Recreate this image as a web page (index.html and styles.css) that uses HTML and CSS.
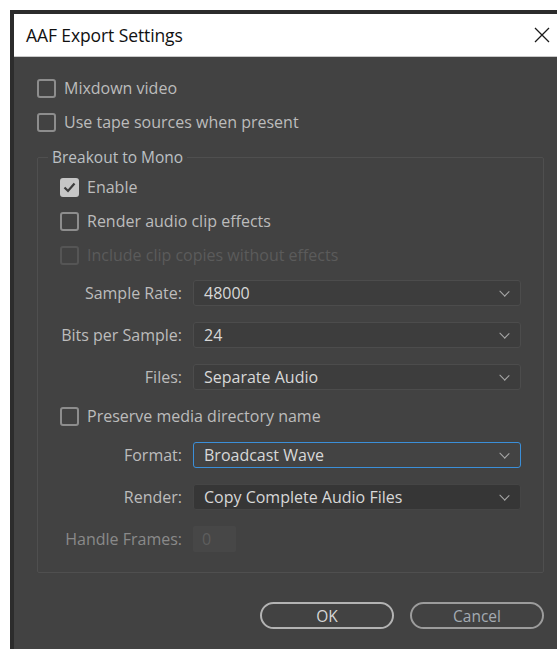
FILE: index.html
```html
<!DOCTYPE html>
<html lang="en">
<head>
<meta charset="utf-8">
<title>AAF Export Settings</title>
<link rel="stylesheet" href="styles.css">
</head>
<body>
<div class="window">
  <div class="titlebar">
    <span class="title">AAF Export Settings</span>
    <svg class="close" width="16" height="16" viewBox="0 0 16 16" aria-hidden="true">
      <path d="M1 1 L15 15 M15 1 L1 15" stroke="#1a1a1a" stroke-width="1.3" fill="none"/>
    </svg>
  </div>
  <div class="content">
    <label class="check"><span class="box"></span><span>Mixdown video</span></label>
    <label class="check"><span class="box"></span><span>Use tape sources when present</span></label>

    <fieldset class="group">
      <legend>Breakout to Mono</legend>
      <label class="check"><span class="box checked"><svg width="13" height="11" viewBox="0 0 13 11"><path d="M1.5 5.5 L5 9 L11.5 1.5" stroke="#3c3c3c" stroke-width="2.2" fill="none"/></svg></span><span>Enable</span></label>
      <label class="check"><span class="box"></span><span>Render audio clip effects</span></label>
      <label class="check disabled"><span class="box"></span><span>Include clip copies without effects</span></label>

      <div class="field"><span class="flabel">Sample Rate:</span><div class="select"><span>48000</span><i class="chev"></i></div></div>
      <div class="field"><span class="flabel">Bits per Sample:</span><div class="select"><span>24</span><i class="chev"></i></div></div>
      <div class="field"><span class="flabel">Files:</span><div class="select"><span>Separate Audio</span><i class="chev"></i></div></div>

      <label class="check preserve"><span class="box"></span><span>Preserve media directory name</span></label>

      <div class="field"><span class="flabel">Format:</span><div class="select focus"><span>Broadcast Wave</span><i class="chev"></i></div></div>
      <div class="field"><span class="flabel">Render:</span><div class="select dark"><span>Copy Complete Audio Files</span><i class="chev"></i></div></div>
      <div class="field"><span class="flabel dim">Handle Frames:</span><div class="numbox">0</div></div>
    </fieldset>

    <div class="buttons">
      <button class="btn ok">OK</button>
      <button class="btn cancel">Cancel</button>
    </div>
  </div>
</div>
</body>
</html>
```
FILE: styles.css
```css
html, body {
  margin: 0;
  padding: 0;
  background: #ffffff;
  overflow: hidden;
}

body {
  width: 557px;
  height: 649px;
  padding: 10px 0 0 10px;
  box-sizing: border-box;
  font-family: "Open Sans", "Noto Sans", sans-serif;
}

.window {
  width: 560px;
  height: 660px;
  border-top: 4px solid #2c2c2c;
  border-left: 4px solid #2c2c2c;
  background: #424242;
  display: flex;
  flex-direction: column;
}

.titlebar {
  height: 43px;
  background: #ffffff;
  border-bottom: 1px solid #c9c9c9;
  display: flex;
  align-items: center;
  padding-left: 12px;
  box-sizing: border-box;
}

.title {
  font-size: 17.5px;
  color: #111111;
  letter-spacing: -0.1px;
  margin-top: -1px;
}

.close {
  margin-left: auto;
  margin-right: 24px;
}

.content {
  padding: 14px 0 0 23px;
  color: #bcbcbc;
  font-size: 16px;
}

.check {
  height: 34px;
  display: flex;
  align-items: center;
  gap: 8px;
}

.box {
  width: 19px;
  height: 19px;
  box-sizing: border-box;
  border: 2px solid #8d8d8d;
  border-radius: 3px;
  display: flex;
  align-items: center;
  justify-content: center;
  flex: none;
}

.box.checked {
  background: #c6c6c6;
  border-color: #c6c6c6;
}

.check.disabled {
  color: #5b5b5b;
}

.check.disabled .box {
  border-color: #555555;
}

.group {
  margin: 8px 0 0 0;
  width: 507px;
  box-sizing: border-box;
  border: 1px solid #4f4f4f;
  border-radius: 2px;
  padding: 3px 22px 12px 22px;
  min-width: 0;
}

.group legend {
  padding: 0 4px;
  margin-left: -12px;
  line-height: 20px;
  font-size: 15.5px;
  color: #bcc0c4;
}

.field {
  height: 42px;
  display: flex;
  align-items: center;
}

.flabel {
  width: 122px;
  text-align: right;
  margin-right: 11px;
  flex: none;
  white-space: nowrap;
}

.flabel.dim {
  color: #8a8a8a;
}

.select {
  width: 328px;
  height: 26px;
  box-sizing: border-box;
  border: 1px solid #4c4c4c;
  border-radius: 3px;
  background: #3d3d3d;
  display: flex;
  align-items: center;
  padding: 0 10px;
  color: #d8d8d8;
}

.select.focus {
  border: 1px solid #3b8fd9;
  background: #434343;
}

.select.dark {
  background: #363636;
  border-color: #454545;
}

.chev {
  margin-left: auto;
  width: 6px;
  height: 6px;
  border-right: 1.5px solid #a9a9a9;
  border-bottom: 1.5px solid #a9a9a9;
  transform: rotate(45deg) scaleX(1.1);
  margin-top: -4px;
  margin-right: 2px;
}

.preserve {
  height: 36px;
}

.numbox {
  width: 43px;
  height: 26px;
  box-sizing: border-box;
  background: #474747;
  border-radius: 2px;
  color: #5e5e5e;
  display: flex;
  align-items: center;
  padding-left: 9px;
}

.buttons {
  display: flex;
  gap: 16px;
  margin-top: 29px;
  padding-left: 223px;
}

.btn {
  width: 134px;
  height: 27px;
  border: 2px solid #b3b3b3;
  border-radius: 14px;
  background: transparent;
  font-family: inherit;
  font-size: 15.5px;
  padding: 0;
}

.btn.ok {
  color: #d6d6d6;
}

.btn.cancel {
  border-color: #9c9c9c;
  color: #a4abb2;
}
```
